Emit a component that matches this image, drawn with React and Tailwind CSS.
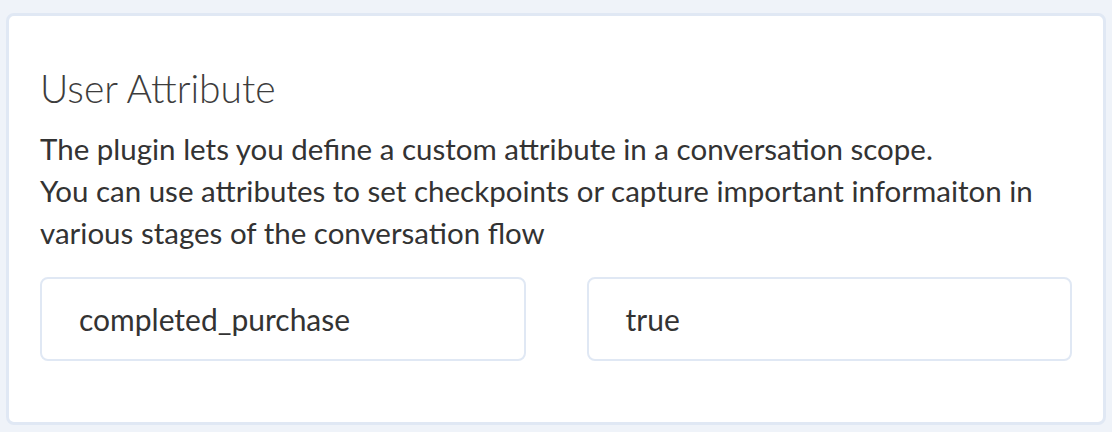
export default function App() {
  return (
    <div className="w-[1112px] h-[432px] bg-[#eff3f9] pt-[13px] pl-[6px] pr-[6px] font-['Lato','Liberation_Sans',sans-serif]">
      <div className="h-[412px] bg-white border-[3px] border-[#e0e8f4] rounded-[8px] px-[31px] pt-[49px]">
        <h2 className="text-[39px] font-light leading-[46px] text-[#3d3d3d]">User Attribute</h2>
        <p className="mt-[17px] text-[29.5px] leading-[42px] text-[#333]">
          The plugin lets you define a custom attribute in a conversation scope.
          <br />
          You can use attributes to set checkpoints or capture important informaiton in various stages of the conversation flow
        </p>
        <div className="mt-[23px] flex gap-[61px]">
          <div className="w-[486px] h-[84px] border-2 border-[#e0e8f4] rounded-[8px] pl-[37px] flex items-center text-[30px] text-[#333]">
            completed_purchase
          </div>
          <div className="w-[486px] h-[84px] border-2 border-[#e0e8f4] rounded-[8px] pl-[37px] flex items-center text-[30px] text-[#333]">
            true
          </div>
        </div>
      </div>
    </div>
  )
}
